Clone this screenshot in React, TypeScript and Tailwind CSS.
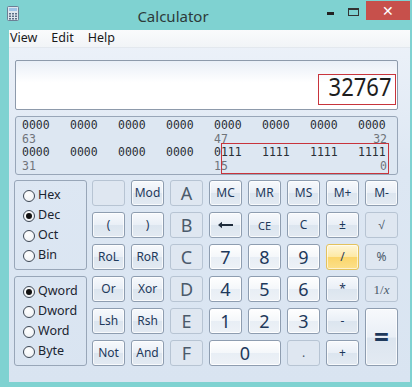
import type { ReactNode } from "react";

type Kind = "fn" | "num" | "off" | "hot";

interface Key {
  label: ReactNode;
  kind: Kind;
  size?: string;
  span?: string;
}

const kindClass: Record<Kind, string> = {
  fn: "border-[#8e9db0] bg-[linear-gradient(#f7f9fc,#e9eff6_50%,#dce5ef_52%,#e3eaf2)] text-[#1e395b] shadow-[inset_0_0_0_1px_rgba(255,255,255,0.75)]",
  num: "border-[#8e9db0] bg-[linear-gradient(#ffffff,#f4f7fa_50%,#e8eef5_52%,#eef2f7)] text-[#1e395b] shadow-[inset_0_0_0_1px_rgba(255,255,255,0.9)]",
  off: "border-[#b7c4d3] bg-[#dfe7f1] text-[#4b5a6b]",
  hot: "border-[#e3c25d] bg-[linear-gradient(#fef6d8,#fde9a4_50%,#fbd66c_52%,#fce08a)] text-[#1e395b] shadow-[inset_0_0_0_1px_rgba(255,255,255,0.6)]",
};

function Backspace() {
  return (
    <svg width="17" height="8" viewBox="0 0 17 8">
      <path d="M1 4 L5 0.8 L5 3 L16 3 L16 5 L5 5 L5 7.2 Z" fill="#1e2b3b" />
    </svg>
  );
}

const keys: Key[] = [
  { label: "", kind: "off" },
  { label: "Mod", kind: "fn" },
  { label: "A", kind: "off", size: "text-[18px]" },
  { label: "MC", kind: "fn" },
  { label: "MR", kind: "fn" },
  { label: "MS", kind: "fn" },
  { label: "M+", kind: "fn" },
  { label: "M-", kind: "fn" },

  { label: "(", kind: "fn" },
  { label: ")", kind: "fn" },
  { label: "B", kind: "off", size: "text-[18px]" },
  { label: <Backspace />, kind: "fn" },
  { label: "CE", kind: "fn", size: "text-[11px]" },
  { label: "C", kind: "fn" },
  { label: "±", kind: "fn" },
  { label: "√", kind: "off" },

  { label: "RoL", kind: "fn" },
  { label: "RoR", kind: "fn" },
  { label: "C", kind: "off", size: "text-[18px]" },
  { label: "7", kind: "num", size: "text-[18px]" },
  { label: "8", kind: "num", size: "text-[18px]" },
  { label: "9", kind: "num", size: "text-[18px]" },
  { label: "/", kind: "hot" },
  { label: "%", kind: "off" },

  { label: "Or", kind: "fn" },
  { label: "Xor", kind: "fn" },
  { label: "D", kind: "off", size: "text-[18px]" },
  { label: "4", kind: "num", size: "text-[18px]" },
  { label: "5", kind: "num", size: "text-[18px]" },
  { label: "6", kind: "num", size: "text-[18px]" },
  { label: "*", kind: "fn" },
  {
    label: (
      <span className="font-['Liberation_Serif',serif] text-[13px]">
        1/<i>x</i>
      </span>
    ),
    kind: "off",
  },

  { label: "Lsh", kind: "fn" },
  { label: "Rsh", kind: "fn" },
  { label: "E", kind: "off", size: "text-[18px]" },
  { label: "1", kind: "num", size: "text-[18px]" },
  { label: "2", kind: "num", size: "text-[18px]" },
  { label: "3", kind: "num", size: "text-[18px]" },
  { label: "-", kind: "fn" },
  { label: "=", kind: "fn", size: "text-[26px] font-bold", span: "row-span-2" },

  { label: "Not", kind: "fn" },
  { label: "And", kind: "fn" },
  { label: "F", kind: "off", size: "text-[18px]" },
  { label: "0", kind: "num", size: "text-[18px]", span: "col-span-2" },
  { label: ".", kind: "off" },
  { label: "+", kind: "fn" },
];

function Radio({ label, on }: { label: string; on?: boolean }) {
  return (
    <div className="flex h-[20px] items-center gap-[3px]">
      <span className="flex h-[12px] w-[12px] items-center justify-center rounded-full border border-[#3d4754] bg-[radial-gradient(circle_at_40%_35%,#ffffff,#e9edf1)]">
        {on && <span className="h-[6px] w-[6px] rounded-full bg-[#111]" />}
      </span>
      <span className="text-[12.5px] text-[#1b2430]">{label}</span>
    </div>
  );
}

function Group({ items, on }: { items: string[]; on: string }) {
  return (
    <div className="flex h-[90px] flex-col justify-center rounded-[3px] border border-[#98a6b8] pl-[8px] pt-[1px]">
      {items.map((l) => (
        <Radio key={l} label={l} on={l === on} />
      ))}
    </div>
  );
}

const bitsTop = ["0000", "0000", "0000", "0000", "0000", "0000", "0000", "0000"];
const bitsLow = ["0000", "0000", "0000", "0000", "0111", "1111", "1111", "1111"];

function BitRow({ bits }: { bits: string[] }) {
  return (
    <div className="grid h-[13.5px] grid-cols-[repeat(7,48px)_auto] text-[#2a2f36]">
      {bits.map((b, i) => (
        <span key={i}>{b}</span>
      ))}
    </div>
  );
}

function IndexRow({ a, b, c }: { a: string; b: string; c: string }) {
  return (
    <div className="grid h-[13.5px] grid-cols-[192px_1fr_auto] text-[#6f747a]">
      <span>{a}</span>
      <span>{b}</span>
      <span>{c}</span>
    </div>
  );
}

export default function App() {
  return (
    <div className="flex h-[387px] w-[412px] flex-col bg-[#7fd2d1] font-['Noto_Sans',sans-serif]">
      {/* title bar */}
      <div className="relative flex h-[30px] shrink-0 items-start">
        <div className="pl-[7px] pt-[6px]">
          <svg width="12" height="15" viewBox="0 0 12 15">
            <rect x="0.5" y="0.5" width="11" height="14" rx="1" fill="#dfe6ee" stroke="#6b7f95" />
            <rect x="2" y="2" width="8" height="3" fill="#9fc3e6" />
            {[0, 1, 2].map((r) =>
              [0, 1, 2].map((c) => (
                <rect key={`${r}${c}`} x={2 + c * 3} y={7 + r * 2.5} width="2" height="1.5" fill="#5c6f86" />
              )),
            )}
          </svg>
        </div>
        <div className="flex-1 pt-[5px] text-center text-[15px] text-[#2d3a3a]">Calculator</div>
        <div className="flex items-start">
          <div className="mr-[14px] mt-[12px] h-[3px] w-[7px] bg-[#222]" />
          <div className="mr-[7px] mt-[8px] h-[8px] w-[11px] border border-[#333] border-t-2" />
          <div className="mr-[2px] mt-[1px] flex h-[19px] w-[44px] items-center justify-center bg-[#c7504b] text-[14px] leading-none text-white">
            ✕
          </div>
        </div>
      </div>

      {/* window body */}
      <div className="ml-[9px] mr-[2px] flex h-[352px] flex-col bg-[linear-gradient(#edf2f9,#dde7f3_40%,#d9e4f1)]">
        <div className="flex h-[18px] shrink-0 items-center gap-[14px] border-b border-[#e3e8ee] bg-[linear-gradient(#fafbfc,#f1f4f7)] pl-[1px] text-[12.5px] text-[#1a1a1a]">
          <span>View</span>
          <span>Edit</span>
          <span>Help</span>
        </div>

        <div className="flex flex-col pl-[5px] pt-[12px]">
          {/* display */}
          <div className="relative ml-[1px] flex h-[50px] w-[383px] items-center justify-end rounded-[2px] border border-[#8d9aab] bg-[linear-gradient(#e9eff7,#ffffff_45%,#ffffff)] pr-[5px] pt-[2px]">
            <span className="origin-right scale-x-[0.88] text-[25px] leading-none text-[#1d1d1d]">32767</span>
            <div className="absolute left-[302px] top-[13px] h-[31px] w-[78px] border border-[#c8343c]" />
          </div>

          {/* binary */}
          <div className="relative ml-[1px] mt-[6px] h-[59px] w-[383px] rounded-[3px] border border-[#98a6b8] bg-[#dde7f2] pl-[6px] pr-[10px] pt-[2px] font-['DejaVu_Sans_Mono',monospace] text-[11.5px] leading-[13.5px]">
            <BitRow bits={bitsTop} />
            <IndexRow a="63" b="47" c="32" />
            <BitRow bits={bitsLow} />
            <IndexRow a="31" b="15" c="0" />
            <div className="absolute left-[205px] top-[26px] h-[31px] w-[168px] border border-[#c8343c]" />
          </div>

          {/* keypad */}
          <div className="mt-[5px] flex gap-[5px]">
            <div className="flex w-[73px] flex-col gap-[6px]">
              <Group items={["Hex", "Dec", "Oct", "Bin"]} on="Dec" />
              <Group items={["Qword", "Dword", "Word", "Byte"]} on="Qword" />
            </div>
            <div className="grid grid-cols-[repeat(8,33px)] grid-rows-[repeat(6,26px)] gap-[6px]">
              {keys.map((k, i) => (
                <div
                  key={i}
                  className={`flex items-center justify-center rounded-[3px] border leading-none ${kindClass[k.kind]} ${k.size ?? "text-[12px]"} ${k.span ?? ""}`}
                >
                  {k.label}
                </div>
              ))}
            </div>
          </div>
        </div>
      </div>
    </div>
  );
}
